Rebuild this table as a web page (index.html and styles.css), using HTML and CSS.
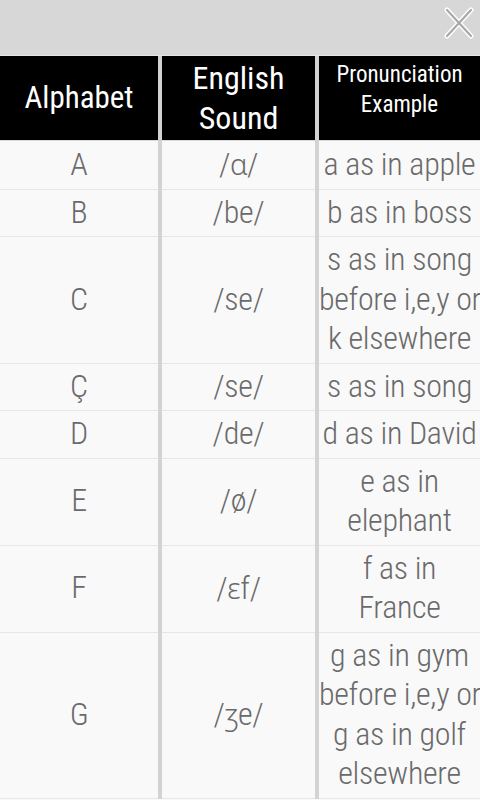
FILE: index.html
```html
<!DOCTYPE html>
<html>
<head>
<meta charset="utf-8">
<link rel="stylesheet" href="styles.css">
</head>
<body>
<div class="top">
  <svg class="close" width="30" height="32" viewBox="0 0 30 32">
    <g stroke-linecap="round">
      <path d="M3 3 L27 29 M27 3 L3 29" stroke="#ffffff" stroke-width="5"/>
      <path d="M3 3 L27 29 M27 3 L3 29" stroke="#a9a9a9" stroke-width="2.2"/>
    </g>
  </svg>
</div>
<div class="table">
  <div class="hc h1"><div>Alphabet</div></div>
  <div class="hc h2"><div>English<br>Sound</div></div>
  <div class="hc h3"><div>Pronunciation<br>Example</div></div>

  <div class="c"><div>A</div></div><div class="c"><div>/<span class="ipa">ɑ</span>/</div></div><div class="c"><div>a as in apple</div></div>
  <div class="c"><div>B</div></div><div class="c"><div>/be/</div></div><div class="c"><div>b as in boss</div></div>
  <div class="c"><div>C</div></div><div class="c"><div>/se/</div></div><div class="c"><div>s as in song<br>before i,e,y or<br>k elsewhere</div></div>
  <div class="c"><div>Ç</div></div><div class="c"><div>/se/</div></div><div class="c"><div>s as in song</div></div>
  <div class="c"><div>D</div></div><div class="c"><div>/de/</div></div><div class="c"><div>d as in David</div></div>
  <div class="c"><div>E</div></div><div class="c"><div>/ø/</div></div><div class="c"><div>e as in<br>elephant</div></div>
  <div class="c"><div>F</div></div><div class="c"><div>/<span class="ipa">ɛ</span>f/</div></div><div class="c"><div>f as in<br>France</div></div>
  <div class="c"><div>G</div></div><div class="c"><div>/<span class="ipa">ʒ</span>e/</div></div><div class="c"><div>g as in gym<br>before i,e,y or<br>g as in golf<br>elsewhere</div></div>
</div>
</body>
</html>
```
FILE: styles.css
```css
html, body {
  margin: 0;
  padding: 0;
  width: 480px;
  height: 800px;
  overflow: hidden;
  background: #f9f9f9;
  font-family: "Roboto Condensed", Roboto, sans-serif;
}

.top {
  height: 55px;
  background: #d7d7d7;
  border-bottom: 1px solid #e6e6e6;
  display: flex;
  justify-content: flex-end;
  align-items: center;
  padding-right: 6px;
}

.close {
  display: block;
  margin-top: -10px;
}

.table {
  display: grid;
  grid-template-columns: 158px 153px 161px;
  column-gap: 4px;
  background: #d3d3d3;
}

.hc {
  background: #000;
  color: #fff;
  height: 85px;
  box-sizing: border-box;
  border-bottom: 1px solid #d8d8d8;
  display: flex;
  flex-direction: column;
  justify-content: center;
  text-align: center;
  white-space: nowrap;
  overflow: hidden;
}

.h1 {
  font-size: 31px;
  line-height: 36px;
}

.h2 {
  font-size: 32px;
  line-height: 40px;
}

.h3 {
  font-size: 23px;
  line-height: 30px;
  justify-content: flex-start;
  padding-top: 4px;
}

.c {
  background: #f9f9f9;
  color: #6a6a6a;
  font-size: 32px;
  font-weight: 300;
  letter-spacing: -0.3px;
  line-height: 39.5px;
  padding: 3px 0 4px;
  border-bottom: 1px solid #e6e6e6;
  display: flex;
  flex-direction: column;
  justify-content: center;
  text-align: center;
  white-space: nowrap;
  overflow: hidden;
}

.ipa {
  font-family: "Open Sans", "Noto Sans", "DejaVu Sans", sans-serif;
  font-weight: 300;
  font-size: 29px;
}
```
